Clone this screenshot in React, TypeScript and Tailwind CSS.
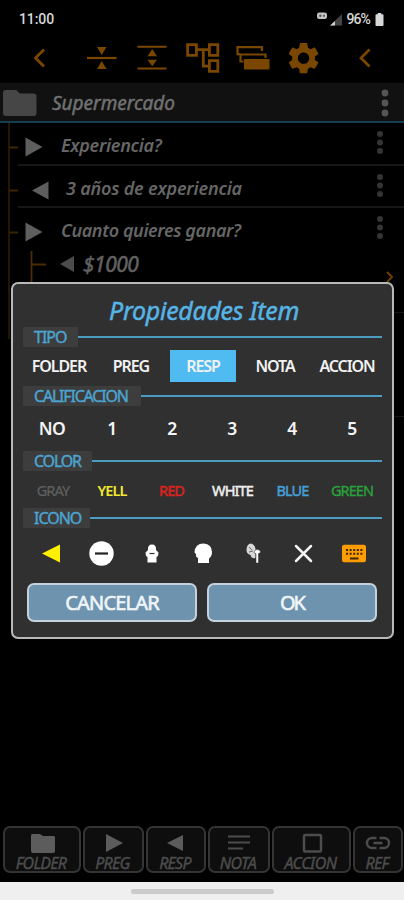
import type { ReactNode } from "react";

const ORANGE = "#7a4700";

function Dots({ small = false }: { small?: boolean }) {
  return small ? (
    <svg width="8" height="26" viewBox="0 0 8 26" fill="#343434" className="absolute left-[376px] top-[7px]">
      <circle cx="4" cy="4" r="3" />
      <circle cx="4" cy="12.5" r="3" />
      <circle cx="4" cy="21" r="3" />
    </svg>
  ) : (
    <svg width="10" height="30" viewBox="0 0 10 30" fill="#555" className="ml-auto mr-[14px] mt-[2px]">
      <circle cx="5" cy="5" r="3.4" />
      <circle cx="5" cy="15" r="3.4" />
      <circle cx="5" cy="25" r="3.4" />
    </svg>
  );
}

function StatusBar() {
  return (
    <div className="flex h-[38px] items-center pl-[19px] pr-[20px] pt-[1px] font-['Roboto',sans-serif] text-[#d8d8d8]">
      <span className="text-[14px] font-medium tracking-[-0.1px]">11:00</span>
      <svg width="26" height="16" viewBox="0 0 26 16" className="ml-auto mr-[3px]">
        <rect x="0" y="0.500" width="10" height="6.500" rx="2.500" fill="#c4c4c4" />
        <path d="M2.300 2.800h2v2h-2zM6.300 2.800h1.500v2H6.300z" fill="#444" />
        <path d="M13 13.500L25 2v11.500z" fill="#444" />
        <path d="M13 13.500l5-4.500v4.500z" fill="#ccc" />
      </svg>
      <span className="text-[14px] font-medium tracking-[-0.900px]">96%</span>
      <svg width="9" height="14" viewBox="0 0 8 14" className="ml-[5px]" fill="#d8d8d8">
        <path d="M2.200 0h3.600v1.200H7q1 0 1 1V12q0 1-1 1H1q-1 0-1-1V2.200q0-1 1-1h1.200z" />
      </svg>
    </div>
  );
}

function Toolbar() {
  return (
    <div className="h-[45px]">
      <svg width="404" height="45" viewBox="0 38 404 45" fill="none" stroke={ORANGE}>
        <path d="M44 49.500L35.500 58l8.500 8.500M369.500 49.500L361 58l8.500 8.500" strokeWidth="2.800" />
        <path d="M87 58h29.500" strokeWidth="2.200" />
        <path d="M97 47h9.500l-4.750 8zM97 69h9.500l-4.750-8z" fill={ORANGE} stroke="none" />
        <path d="M137.500 46.800h29M137.500 68.400h29" strokeWidth="2" />
        <path d="M147.500 56.300h9.500l-4.750-7.300zM147.500 59.800h9.500l-4.750 6.500z" fill={ORANGE} stroke="none" />
        <path d="M187.600 44.600h8.800v10.800h-8.800zM209.400 44.600h8.400v10.800h-8.400zM209.400 60.600h8.400v10.800h-8.400zM196.500 49.700h13M203.300 49.700v16.500h6" strokeWidth="2.800" />
        <path d="M262 51v-3.800h-24.500v7h3M265.500 58v-3.500h-25v7h3" strokeWidth="2.200" />
        <path d="M244 59h25.500v10.500H244z" fill={ORANGE} stroke="none" />
        <g transform="translate(284.600 39.200) scale(1.580)" fill={ORANGE} stroke="none">
          <path d="M19.140 12.940c.04-.3.060-.61.060-.94 0-.32-.02-.64-.07-.94l2.030-1.580c.18-.14.230-.41.120-.61l-1.920-3.320c-.12-.22-.37-.29-.59-.22l-2.390.96c-.5-.38-1.030-.7-1.620-.94l-.36-2.540c-.04-.24-.24-.41-.48-.41h-3.840c-.24 0-.43.170-.47.410l-.36 2.540c-.59.240-1.130.570-1.620.940l-2.390-.96c-.22-.08-.47 0-.59.220L2.740 8.870c-.12.210-.08.470.120.610l2.030 1.580c-.05.300-.09.630-.09.940s.02.640.070.940l-2.030 1.580c-.18.140-.23.410-.12.610l1.920 3.320c.12.220.370.290.590.220l2.390-.96c.5.380 1.030.700 1.620.940l.36 2.540c.05.240.240.410.480.410h3.840c.24 0 .44-.17.470-.41l.36-2.540c.59-.24 1.130-.56 1.620-.94l2.390.96c.22.080.470 0 .590-.22l1.920-3.320c.12-.22.070-.47-.12-.61l-2.010-1.580zM12 15.600c-1.980 0-3.600-1.620-3.600-3.600s1.620-3.600 3.600-3.600 3.600 1.620 3.600 3.600-1.620 3.600-3.600 3.600z" />
        </g>
      </svg>
    </div>
  );
}

function TreeRow({ children, textClass, left = false, line = true }: { children: string; textClass: string; left?: boolean; line?: boolean }) {
  return (
    <div className="relative h-[42.700px]">
      <svg width="60" height="42" viewBox="0 0 60 42" className="absolute left-0 top-0">
        <path d="M9 24.500h9" stroke="#3c2400" strokeWidth="2" />
        <path d={left ? "M48.500 15.500v18L32 24.500z" : "M25.500 14.500v19L42.500 24z"} fill="#5e5e5e" />
      </svg>
      <div className={"whitespace-nowrap pt-[10px] text-[18px] font-semibold italic leading-[24px] text-[#666] " + textClass}>{children}</div>
      <Dots small />
      {line && <div className="absolute bottom-0 left-[18px] right-0 h-[2px] bg-[#171717]" />}
    </div>
  );
}

function Section({ title, width, className }: { title: string; width: string; className: string }) {
  return (
    <div className={"flex h-[20px] items-center pl-[10px] pr-[10px] " + className}>
      <div className={"h-[20px] shrink-0 rounded-[1px] bg-[#3d3d3d] pl-[11px] text-[16px] leading-[21px] text-[#4ca5d2] [-webkit-text-stroke:0.400px_#4ca5d2] " + width}>{title}</div>
      <div className="h-[2px] flex-1 bg-[#4a9cc0]" />
    </div>
  );
}

function BottomButton({ label, width, text, children }: { label: string; width: string; text: string; children: ReactNode }) {
  return (
    <div className={"flex h-[47px] flex-col items-center overflow-hidden rounded-[7px] border-2 border-[#343434] bg-[#0e0e0e] pt-[4px] " + width}>
      <svg width="26" height="22" viewBox="-13 -11 26 22" className="shrink-0" fill="#5c5c5c">
        {children}
      </svg>
      <span className={"-ml-[2px] -mt-[1px] text-[16px] italic leading-[20px] text-[#4c4c4c] [-webkit-text-stroke:0.400px_#4c4c4c] " + text}>{label}</span>
    </div>
  );
}

function Dialog() {
  return (
    <div className="absolute left-[11px] top-[282px] flex h-[357px] w-[383px] flex-col rounded-[7px] border-2 border-[#b9b9b9] bg-[#303030]">
      <h1 className="mt-[9px] h-[34px] pl-[3px] text-center text-[25px] italic leading-[35px] tracking-[-0.300px] text-[#56b4e6] [-webkit-text-stroke:0.500px_#56b4e6]">Propiedades Item</h1>
      <Section title="TIPO" width="w-[55px] tracking-[-1px]" className="" />
      <div className="mt-[3px] flex h-[32px] items-center text-[16px] font-semibold tracking-[-1.100px] text-[#f2f2f2]">
        <span className="ml-[10px] w-[72px] text-center">FOLDER</span>
        <span className="w-[72px] text-center">PREG</span>
        <span className="ml-[3px] h-[32px] w-[66px] bg-[#50bbf0] text-center leading-[32px]">RESP</span>
        <span className="ml-[3px] w-[72px] text-center">NOTA</span>
        <span className="w-[72px] text-center">ACCION</span>
      </div>
      <Section title="CALIFICACION" width="w-[118px] tracking-[-1.200px]" className="mt-[4px]" />
      <div className="mt-[7px] flex h-[31px] items-center pl-[9px] text-[17.500px] font-semibold tracking-[-0.500px] text-[#f4f4f4]">
        {["NO", "1", "2", "3", "4", "5"].map((n) => (
          <span key={n} className="w-[60px] text-center">{n}</span>
        ))}
      </div>
      <Section title="COLOR" width="w-[69px] tracking-[-1.200px]" className="mt-[7px]" />
      <div className="mt-[4px] flex h-[31px] items-center pl-[10px] text-[14.500px] tracking-[-0.900px]">
        <span className="w-[60px] text-center text-[#606060] [-webkit-text-stroke:0.200px_#606060]">GRAY</span>
        <span className="w-[58px] text-center font-semibold text-[#f2ea2c]">YELL</span>
        <span className="w-[61px] text-center text-[#d8231f] [-webkit-text-stroke:0.500px_#d8231f]">RED</span>
        <span className="w-[61px] text-center text-[#eee] [-webkit-text-stroke:0.500px_#eee]">WHITE</span>
        <span className="w-[59px] text-center text-[#459fd6] [-webkit-text-stroke:0.500px_#459fd6]">BLUE</span>
        <span className="w-[60px] text-center text-[#2aa03c] [-webkit-text-stroke:0.400px_#2aa03c]">GREEN</span>
      </div>
      <Section title="ICONO" width="w-[67px] tracking-[-1px]" className="mt-[2px]" />
      <svg width="379" height="50" viewBox="13 528 379 50" className="shrink-0" fill="#fff">
        <path d="M60 544.500v18l-18-9z" fill="#fff000" />
        <circle cx="101.500" cy="553.500" r="12.200" />
        <path d="M95 553.500h13" stroke="#222" strokeWidth="2.200" />
        <path d="M148 550q-.5-5.500 4-5.500t4 5.500l2.500 2.500-.5 3.500-1.500 1v5.500h-9V557l-1.500-1-.5-3.500z" />
        <path d="M149.500 553.500h5" stroke="#333" strokeWidth="1.200" />
        <path d="M198 563v-5l-2-1.500v-2.500l-1.500-1.500q.5-9 9-9 8.500.5 8.500 8.500 0 4-3 6.500v4.500z" />
        <path d="M246.500 550q0-6 4.500-6.500 4 1 4.500 5.500v9q-4 1-5-3-4-1-4-5z" fill="#d8d8d8" />
        <path d="M249 547l3 3M249 552l4-1" stroke="#666" strokeWidth="1" />
        <path d="M254 553q0-3.500 3.300-3.500t3.200 3l-2 1V563h-2.500v-9.500z" stroke="#303030" strokeWidth=".5" />
        <path d="M296 546l15 15M311 546l-15 15" stroke="#f2f2f2" strokeWidth="2.500" strokeLinecap="round" />
        <rect x="342" y="544.800" width="24" height="17.500" rx="2.200" fill="#ff9c00" />
        <path d="M346 550h16.500M346 553.800h16.500" stroke="#3a2700" strokeWidth="2" strokeDasharray="2 1.600" />
        <path d="M350 558.500h8.500" stroke="#3a2700" strokeWidth="2" />
      </svg>
      <div className="mt-[5px] flex justify-center gap-[10px] pr-[1px]">
        <button className="h-[39px] w-[170px] rounded-[7px] border-2 border-[#c3d2dc] bg-[#6d93af] text-[20px] leading-[35px] tracking-[-0.800px] text-[#f0f5f8] [-webkit-text-stroke:0.600px_#f0f5f8]">CANCELAR</button>
        <button className="h-[39px] w-[170px] rounded-[7px] border-2 border-[#c3d2dc] bg-[#6d93af] text-[20px] leading-[35px] tracking-[-2px] text-[#f0f5f8] [-webkit-text-stroke:0.600px_#f0f5f8]">OK</button>
      </div>
    </div>
  );
}

export default function App() {
  return (
    <div className="relative flex h-[900px] w-[404px] flex-col overflow-hidden bg-black font-['Noto_Sans',sans-serif]">
      <StatusBar />
      <Toolbar />
      <div className="flex h-[40px] items-center border-b-2 border-[#173d50] bg-[#111]">
        <svg width="34" height="26" viewBox="0 0 34 26" fill="#464646" className="ml-[3px] mt-[2px]">
          <path d="M3 0h10l4 3.500h13.500q3 0 3 3V23q0 3-3 3H3q-3 0-3-3V3q0-3 3-3z" />
        </svg>
        <span className="ml-[15px] mt-[3px] text-[19px] italic text-[#707070] [-webkit-text-stroke:0.500px_#707070]">Supermercado</span>
        <Dots />
      </div>
      <div className="relative flex-1">
        <div className="absolute left-[8px] top-0 h-[216px] w-[2px] bg-[#241600]" />
        <TreeRow textClass="pl-[61px] tracking-[-0.300px]">Experiencia?</TreeRow>
        <TreeRow textClass="pl-[66px] tracking-[-0.200px]" left>3 años de experiencia</TreeRow>
        <TreeRow textClass="pl-[61px] tracking-[-0.400px]" line={false}>Cuanto quieres ganar?</TreeRow>
        <div className="flex h-[32px] items-center">
          <svg width="52" height="32" viewBox="0 0 52 32" className="ml-[30px]" fill="none">
            <path d="M1.500 0v32M1.500 13.500H16" stroke="#4c2d00" strokeWidth="1.800" />
            <path d="M44 5v16l-14-8z" fill="#4c4c4c" />
          </svg>
          <span className="-mt-[7px] ml-px text-[21px] italic leading-[26px] tracking-[-0.500px] text-[#626262] [-webkit-text-stroke:0.500px_#626262]">$1000</span>
          <svg width="10" height="14" viewBox="0 0 10 14" className="ml-auto mr-[9px] mt-[20px]" fill="none">
            <path d="M2 2l5 5-5 5" stroke="#6b3e00" strokeWidth="2" />
          </svg>
        </div>
        <div className="absolute right-0 top-[189px] h-px w-[10px] bg-[#171717]" />
        <div className="absolute right-0 top-[293px] h-px w-[10px] bg-[#171717]" />
      </div>
      <div className="flex h-[57px] gap-[2px] pl-[3px] pt-[1px]">
        <BottomButton label="FOLDER" width="w-[78px]" text="tracking-[-0.700px]">
          <path d="M-10-9h8l3 2h10.500q1.500 0 1.500 1.500V8q0 2-2 2h-20q-2 0-2-2V-7q0-2 1-2z" />
        </BottomButton>
        <BottomButton label="PREG" width="w-[61px]" text="tracking-[-0.700px]">
          <path d="M-8-9v18L9 0z" />
        </BottomButton>
        <BottomButton label="RESP" width="w-[60px]" text="tracking-[-0.700px]">
          <path d="M7-8v16L-9 0z" />
        </BottomButton>
        <BottomButton label="NOTA" width="w-[62px]" text="tracking-[-0.500px]">
          <path d="M-11-6.500h22M-11-.5h22M-11 5.500H4" stroke="#4c4c4c" strokeWidth="2" />
        </BottomButton>
        <BottomButton label="ACCION" width="w-[79px]" text="tracking-[-0.500px]">
          <rect x="-8" y="-8" width="17" height="16.500" rx="1" fill="none" stroke="#4c4c4c" strokeWidth="2.500" />
        </BottomButton>
        <BottomButton label="REF" width="w-[50px]" text="tracking-[-0.700px]">
          <path d="M-1.500-5H-6a5 5 0 0 0 0 10h4.500M1.500-5H6a5 5 0 0 1 0 10H1.500M-4.500 0h9" fill="none" stroke="#4c4c4c" strokeWidth="2.500" />
        </BottomButton>
      </div>
      <div className="flex h-[18px] justify-center bg-[#efefef] pt-[7px]">
        <div className="h-[5px] w-[143px] rounded-[2px] bg-[#cbcbcb]" />
      </div>
      <Dialog />
    </div>
  );
}
